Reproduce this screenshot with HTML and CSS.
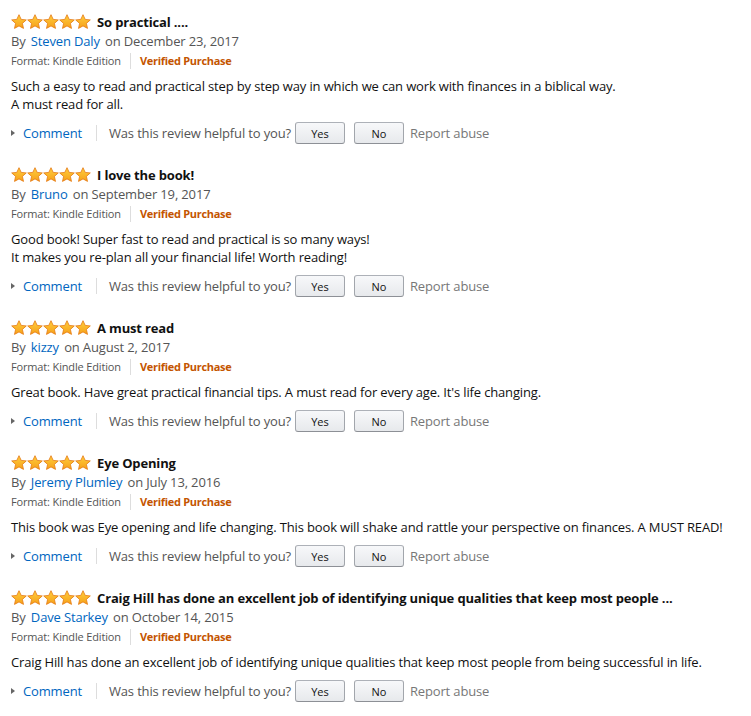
FILE: index.html
```html
<!DOCTYPE html>
<html lang="en">
<head>
    <meta charset="UTF-8">
    <title>Customer Reviews</title>
    <link rel="stylesheet" href="styles.css">
</head>
<body>

    <svg width="0" height="0" class="defs">
        <defs>
            <linearGradient id="star-fill" x1="0" y1="0" x2="0" y2="1">
                <stop offset="0" stop-color="#ffce3d"/>
                <stop offset="1" stop-color="#f6a01a"/>
            </linearGradient>
            <symbol id="star" viewBox="0 0 16 16">
                <path d="M8 0.7l2.2 4.7 5.1 0.5-3.9 3.5 1.1 5L8 11.9l-4.5 2.5 1.1-5L0.7 5.9l5.1-0.5z" fill="url(#star-fill)" stroke="#e47911" stroke-width="0.8" stroke-linejoin="round"/>
            </symbol>
        </defs>
    </svg>

    <div class="reviews">

        <!-- Review 1 -->
        <div class="review">
            <div class="review-head">
                <span class="stars"><svg><use href="#star"/></svg><svg><use href="#star"/></svg><svg><use href="#star"/></svg><svg><use href="#star"/></svg><svg><use href="#star"/></svg></span>
                <span class="review-title">So practical ....</span>
            </div>
            <div class="byline">By <a href="#">Steven Daly</a> on December 23, 2017</div>
            <div class="format">Format: Kindle Edition<span class="sep"></span><span class="verified">Verified Purchase</span></div>
            <div class="review-body">Such a easy to read and practical step by step way in which we can work with finances in a biblical way.<br>A must read for all.</div>
            <div class="actions">
                <span class="caret"></span><a href="#" class="comment">Comment</a><span class="sep"></span>
                <span class="helpful">Was this review helpful to you?</span>
                <button>Yes</button><button>No</button>
                <span class="report">Report abuse</span>
            </div>
        </div>

        <!-- Review 2 -->
        <div class="review">
            <div class="review-head">
                <span class="stars"><svg><use href="#star"/></svg><svg><use href="#star"/></svg><svg><use href="#star"/></svg><svg><use href="#star"/></svg><svg><use href="#star"/></svg></span>
                <span class="review-title">I love the book!</span>
            </div>
            <div class="byline">By <a href="#">Bruno</a> on September 19, 2017</div>
            <div class="format">Format: Kindle Edition<span class="sep"></span><span class="verified">Verified Purchase</span></div>
            <div class="review-body">Good book! Super fast to read and practical is so many ways!<br>It makes you re-plan all your financial life! Worth reading!</div>
            <div class="actions">
                <span class="caret"></span><a href="#" class="comment">Comment</a><span class="sep"></span>
                <span class="helpful">Was this review helpful to you?</span>
                <button>Yes</button><button>No</button>
                <span class="report">Report abuse</span>
            </div>
        </div>

        <!-- Review 3 -->
        <div class="review">
            <div class="review-head">
                <span class="stars"><svg><use href="#star"/></svg><svg><use href="#star"/></svg><svg><use href="#star"/></svg><svg><use href="#star"/></svg><svg><use href="#star"/></svg></span>
                <span class="review-title">A must read</span>
            </div>
            <div class="byline">By <a href="#">kizzy</a> on August 2, 2017</div>
            <div class="format">Format: Kindle Edition<span class="sep"></span><span class="verified">Verified Purchase</span></div>
            <div class="review-body">Great book. Have great practical financial tips. A must read for every age. It's life changing.</div>
            <div class="actions">
                <span class="caret"></span><a href="#" class="comment">Comment</a><span class="sep"></span>
                <span class="helpful">Was this review helpful to you?</span>
                <button>Yes</button><button>No</button>
                <span class="report">Report abuse</span>
            </div>
        </div>

        <!-- Review 4 -->
        <div class="review">
            <div class="review-head">
                <span class="stars"><svg><use href="#star"/></svg><svg><use href="#star"/></svg><svg><use href="#star"/></svg><svg><use href="#star"/></svg><svg><use href="#star"/></svg></span>
                <span class="review-title">Eye Opening</span>
            </div>
            <div class="byline">By <a href="#">Jeremy Plumley</a> on July 13, 2016</div>
            <div class="format">Format: Kindle Edition<span class="sep"></span><span class="verified">Verified Purchase</span></div>
            <div class="review-body">This book was Eye opening and life changing. This book will shake and rattle your perspective on finances. A MUST READ!</div>
            <div class="actions">
                <span class="caret"></span><a href="#" class="comment">Comment</a><span class="sep"></span>
                <span class="helpful">Was this review helpful to you?</span>
                <button>Yes</button><button>No</button>
                <span class="report">Report abuse</span>
            </div>
        </div>

        <!-- Review 5 -->
        <div class="review">
            <div class="review-head">
                <span class="stars"><svg><use href="#star"/></svg><svg><use href="#star"/></svg><svg><use href="#star"/></svg><svg><use href="#star"/></svg><svg><use href="#star"/></svg></span>
                <span class="review-title">Craig Hill has done an excellent job of identifying unique qualities that keep most people ...</span>
            </div>
            <div class="byline">By <a href="#">Dave Starkey</a> on October 14, 2015</div>
            <div class="format">Format: Kindle Edition<span class="sep"></span><span class="verified">Verified Purchase</span></div>
            <div class="review-body">Craig Hill has done an excellent job of identifying unique qualities that keep most people from being successful in life.</div>
            <div class="actions">
                <span class="caret"></span><a href="#" class="comment">Comment</a><span class="sep"></span>
                <span class="helpful">Was this review helpful to you?</span>
                <button>Yes</button><button>No</button>
                <span class="report">Report abuse</span>
            </div>
        </div>

    </div>

</body>
</html>
```

FILE: styles.css
```css
body {
    margin: 0;
    background-color: #fff;
    font-family: "Open Sans", Arial, sans-serif;
    letter-spacing: -0.15px;
    color: #111;
}
.defs {
    position: absolute;
}
.reviews {
    padding: 12px 0 0 11px;
}
.review {
    margin-bottom: 21px;
}
.review-head {
    display: flex;
    align-items: center;
    height: 20px;
}
.stars {
    display: flex;
    margin-right: 6px;
}
.stars svg {
    width: 16px;
    height: 16px;
}
.review-title {
    font-size: 13px;
    font-weight: bold;
    color: #111;
    white-space: nowrap;
}
.byline {
    font-size: 13px;
    line-height: 19px;
    color: #555;
}
.byline a {
    color: #0066c0;
    text-decoration: none;
    margin: 0 2px;
}
.format {
    display: flex;
    align-items: center;
    font-size: 11px;
    line-height: 20px;
    color: #555;
}
.sep {
    display: inline-block;
    width: 1px;
    height: 16px;
    background-color: #ddd;
    margin: 0 9px;
}
.verified {
    color: #c45500;
    font-weight: bold;
    letter-spacing: -0.3px;
}
.review-body {
    font-size: 13px;
    line-height: 18px;
    color: #111;
    margin-top: 6px;
}
.actions {
    display: flex;
    align-items: center;
    font-size: 13px;
    color: #555;
    margin-top: 9px;
    height: 22px;
}
.caret {
    width: 0;
    height: 0;
    border-top: 3px solid transparent;
    border-bottom: 3px solid transparent;
    border-left: 4px solid #666;
    margin-right: 8px;
}
.comment {
    color: #0066c0;
    text-decoration: none;
}
.actions .sep {
    margin: 0 12px 0 14px;
}
.actions button {
    width: 50px;
    height: 22px;
    margin: 0 0 0 4px;
    padding: 0;
    font-family: inherit;
    font-size: 11px;
    color: #111;
    background: linear-gradient(#f7f8fa, #e7e9ec);
    border: 1px solid #adb1b8;
    border-color: #adb1b8 #a2a6ac #8d9096;
    border-radius: 3px;
}
.actions button + button {
    margin-left: 9px;
}
.report {
    color: #777;
    margin-left: 6px;
}
```
